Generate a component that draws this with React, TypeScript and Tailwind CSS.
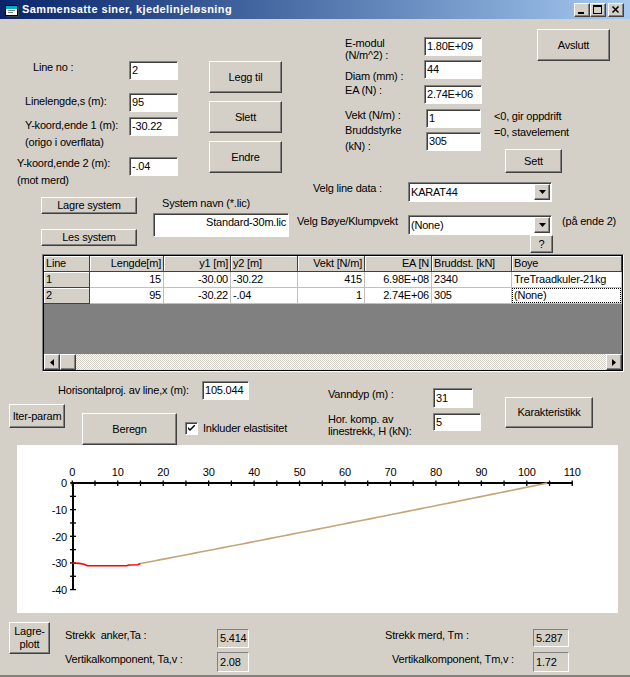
import React from "react";

const raised =
  "bg-[#d4d0c8] border border-t-white border-l-white border-r-[#404040] border-b-[#404040] shadow-[inset_-1px_-1px_#808080]";
const sunken =
  "bg-white border border-t-[#808080] border-l-[#808080] border-b-white border-r-white shadow-[inset_1px_1px_#404040]";

function Btn({ className = "", children }: { className?: string; children?: React.ReactNode }) {
  return (
    <div className={`${raised} flex items-center justify-center text-center shrink-0 whitespace-nowrap ${className}`}>
      {children}
    </div>
  );
}

function Field({
  className = "",
  children,
  right = false,
  top = false,
}: {
  className?: string;
  children?: React.ReactNode;
  right?: boolean;
  top?: boolean;
}) {
  return (
    <div
      className={`${sunken} flex shrink-0 px-[2px] whitespace-nowrap overflow-hidden ${right ? "justify-end" : ""} ${
        top ? "items-start pt-[2px]" : "items-center"
      } ${className}`}
    >
      {children}
    </div>
  );
}

function Out({ className = "", children }: { className?: string; children?: React.ReactNode }) {
  return (
    <div
      className={`bg-[#d4d0c8] border border-t-[#808080] border-l-[#808080] border-b-white border-r-white flex items-center pl-[2px] shrink-0 ${className}`}
    >
      {children}
    </div>
  );
}

function Combo({ value }: { value: string }) {
  return (
    <div className={`${sunken} flex items-center shrink-0 w-[144px] h-[20px] pl-[2px]`}>
      <span className="flex-1 whitespace-nowrap">{value}</span>
      <div className={`${raised} w-[16px] h-[16px] flex items-center justify-center mr-[1px]`}>
        <svg width="7" height="4" viewBox="0 0 7 4">
          <polygon points="0,0 7,0 3.5,4" fill="black" />
        </svg>
      </div>
    </div>
  );
}

function Chart() {
  const X0 = 55.3,
    SX = 4.545,
    Y0 = 38,
    SY = 2.665;
  const px = (x: number) => X0 + x * SX;
  const py = (y: number) => Y0 - y * SY;
  const xt = Array.from({ length: 23 }, (_, i) => i * 5);
  const yt = Array.from({ length: 9 }, (_, i) => -i * 5);
  const red: [number, number][] = [
    [0, -30],
    [1.5, -30.15],
    [2.6, -30.5],
    [3.3, -31.05],
    [12, -31.05],
    [12.4, -30.75],
    [14.4, -30.7],
    [15, -30.22],
  ];
  const tan: [number, number][] = [];
  for (let i = 0; i <= 60; i++) {
    const t = i / 60;
    const x = 15 + t * 89.5;
    const y = -30.22 + t * 30.18 - 2 * t * (1 - t) * 0.5;
    tan.push([x, y]);
  }
  const pts = (a: [number, number][]) => a.map(([x, y]) => `${px(x).toFixed(2)},${py(y).toFixed(2)}`).join(" ");
  return (
    <svg width="601" height="168" viewBox="0 0 601 168" fontFamily="'Liberation Sans', Arial, sans-serif" fontSize="11">
      <line x1={px(0) - 1} y1={Y0} x2={px(110) + 0.5} y2={Y0} stroke="black" strokeWidth="2" />
      <line x1={56} y1={Y0} x2={56} y2={py(-40)} stroke="black" strokeWidth="2" />
      {xt.map((v) => (
        <line key={"xt" + v} x1={px(v)} y1={35.5} x2={px(v)} y2={41} stroke="black" strokeWidth="1.3" />
      ))}
      {yt.map((v) => (
        <line key={"yt" + v} x1={53} y1={py(v)} x2={59} y2={py(v)} stroke="black" strokeWidth="1.3" />
      ))}
      {xt
        .filter((v) => v % 10 === 0)
        .map((v) => (
          <text key={"xl" + v} x={px(v)} y={31} textAnchor="middle" fill="black">
            {v}
          </text>
        ))}
      {yt
        .filter((v) => v % 10 === 0)
        .map((v) => (
          <text key={"yl" + v} x={50} y={py(v) + 4.2} textAnchor="end" fill="black">
            {v === 0 ? "0" : `-${-v}`}
          </text>
        ))}
      <polyline points={pts(tan)} fill="none" stroke="#c4a478" strokeWidth="1.6" />
      <polyline points={pts(red)} fill="none" stroke="#ff0000" strokeWidth="1.6" />
    </svg>
  );
}

function WinBtn({ children, className = "" }: { children: React.ReactNode; className?: string }) {
  return (
    <div
      className={`w-[16px] h-[14px] bg-[#d4d0c8] border border-t-white border-l-white border-r-[#404040] border-b-[#404040] shadow-[inset_-1px_-1px_#808080] flex items-start justify-start ${className}`}
    >
      {children}
    </div>
  );
}

const cols = [46, 74, 67, 67, 67, 67, 80, 110];
const headers: [string, boolean][] = [
  ["Line", false],
  ["Lengde[m]", true],
  ["y1 [m]", true],
  ["y2 [m]", false],
  ["Vekt [N/m]", true],
  ["EA [N", true],
  ["Bruddst. [kN]", false],
  ["Boye", false],
];
const rows: string[][] = [
  ["1", "15", "-30.00", "-30.22", "415", "6.98E+08", "2340", "TreTraadkuler-21kg"],
  ["2", "95", "-30.22", "-.04", "1", "2.74E+06", "305", "(None)"],
];

function Grid() {
  return (
    <div className="ml-[42px] w-[582px] h-[118px] shrink-0 border border-t-[#808080] border-l-[#808080] border-b-white border-r-white">
      <div className="w-full h-full border border-black flex flex-col bg-[#808080] overflow-hidden">
        <div className="flex h-[16px] shrink-0">
          {headers.map(([h, r], i) => (
            <div
              key={h}
              style={{ width: cols[i] }}
              className={`shrink-0 h-full bg-[#d4d0c8] border-r border-b border-r-[#404040] border-b-[#404040] shadow-[inset_1px_1px_white] flex items-center px-[2px] whitespace-nowrap overflow-hidden ${
                r ? "justify-end" : ""
              }`}
            >
              {h}
            </div>
          ))}
        </div>
        {rows.map((row, ri) => (
          <div key={ri} className="flex h-[16px] shrink-0">
            {row.map((c, i) => {
              const r = headers[i][1];
              if (i === 0)
                return (
                  <div
                    key={i}
                    style={{ width: cols[i] }}
                    className="shrink-0 h-full bg-[#d4d0c8] border-r border-b border-r-[#404040] border-b-[#404040] shadow-[inset_1px_1px_white] flex items-center px-[2px]"
                  >
                    {c}
                  </div>
                );
              const focus = ri === 1 && i === 7;
              return (
                <div
                  key={i}
                  style={{ width: cols[i] }}
                  className={`shrink-0 h-full bg-white border-r border-b border-[#c0c0c0] flex items-center whitespace-nowrap overflow-hidden ${
                    r ? "justify-end" : ""
                  } ${focus ? "p-0" : "px-[2px]"}`}
                >
                  {focus ? (
                    <div className="w-full h-full border border-dotted border-black flex items-center px-[1px]">{c}</div>
                  ) : (
                    c
                  )}
                </div>
              );
            })}
          </div>
        ))}
        <div className="flex-1" />
        <div className="flex h-[16px] shrink-0">
          <div className={`${raised} w-[16px] h-[16px] flex items-center justify-center`}>
            <svg width="4" height="7" viewBox="0 0 4 7">
              <polygon points="4,0 4,7 0,3.5" fill="black" />
            </svg>
          </div>
          <div className={`${raised} w-[16px] h-[16px]`} />
          <div className="flex-1 h-full bg-[image:repeating-conic-gradient(#ffffff_0%_25%,#d4d0c8_0%_50%)] bg-[length:2px_2px]" />
          <div className={`${raised} w-[16px] h-[16px] flex items-center justify-center`}>
            <svg width="4" height="7" viewBox="0 0 4 7">
              <polygon points="0,0 0,7 4,3.5" fill="black" />
            </svg>
          </div>
        </div>
      </div>
    </div>
  );
}

export default function App() {
  return (
    <div className="w-[630px] h-[677px] bg-[#d4d0c8] overflow-hidden text-[11px] leading-[13px] tracking-[-0.2px] text-black [font-family:'Liberation_Sans',Arial,sans-serif] flex flex-col border-b-2 border-b-[#808080]">
      {/* Title bar */}
      <div className="h-[19px] shrink-0 flex items-center bg-linear-to-r from-[#0a246a] to-[#a6caf0] pl-[5px] pr-[6px]">
        <svg width="14" height="12" viewBox="0 0 14 12" className="mt-[3px]">
          <rect x="0.5" y="0.5" width="12" height="10" fill="#ffffff" stroke="#000000" />
          <rect x="1" y="1" width="11" height="3" fill="#00b0c0" />
          <rect x="3" y="5" width="7" height="1" fill="#808080" />
          <rect x="3" y="7" width="5" height="1" fill="#808080" />
          <rect x="13" y="2" width="1" height="10" fill="#404040" />
          <rect x="2" y="11" width="12" height="1" fill="#404040" />
        </svg>
        <span className="ml-[3px] text-white font-bold tracking-[0.4px]">Sammensatte siner, kjedelinjeløsning</span>
        <div className="ml-auto flex">
          <WinBtn>
            <div className="ml-[3px] mt-[8px] w-[6px] h-[2px] bg-black" />
          </WinBtn>
          <WinBtn>
            <div className="ml-[2px] mt-[1px] w-[9px] h-[9px] border border-black border-t-2" />
          </WinBtn>
          <WinBtn className="ml-[2px]">
            <svg width="14" height="12" viewBox="0 0 14 12">
              <path d="M3.5 2.5 L9.5 8.5 M9.5 2.5 L3.5 8.5" stroke="black" strokeWidth="1.6" />
            </svg>
          </WinBtn>
        </div>
      </div>

      {/* Top section */}
      <div className="h-[235px] shrink-0 flex">
        {/* Left */}
        <div className="w-[297px] shrink-0 flex flex-col">
          <div className="h-[178px] shrink-0 flex">
            <div className="w-[178px] shrink-0 flex flex-col pt-[42px]">
              <div className="flex h-[19px]">
                <div className="w-[129px] shrink-0 pl-[33px] whitespace-nowrap">Line no :</div>
                <Field className="w-[49px] h-[19px]">2</Field>
              </div>
              <div className="flex h-[19px] mt-[13px]">
                <div className="w-[129px] shrink-0 pl-[25px] pt-[2px] whitespace-nowrap">Linelengde,s (m):</div>
                <Field className="w-[49px] h-[19px]">95</Field>
              </div>
              <div className="flex h-[19px] mt-[5px]">
                <div className="w-[129px] shrink-0 pl-[25px] leading-[17px] whitespace-nowrap">
                  Y-koord,ende 1 (m):
                  <br />
                  (origo i overflata)
                </div>
                <Field className="w-[49px] h-[19px]">-30.22</Field>
              </div>
              <div className="flex h-[19px] mt-[21px]">
                <div className="w-[129px] shrink-0 pl-[17px] leading-[17px] -mt-[2px] whitespace-nowrap">
                  Y-koord,ende 2 (m):
                  <br />
                  (mot merd)
                </div>
                <Field className="w-[49px] h-[19px]">-.04</Field>
              </div>
            </div>
            <div className="ml-[31px] pt-[42px] flex flex-col gap-[8px]">
              <Btn className="w-[73px] h-[32px]">Legg til</Btn>
              <Btn className="w-[73px] h-[32px]">Slett</Btn>
              <Btn className="w-[73px] h-[32px]">Endre</Btn>
            </div>
          </div>
          <div className="flex">
            <div className="ml-[41px] w-[96px] shrink-0 flex flex-col">
              <Btn className="w-[96px] h-[17px]">Lagre system</Btn>
              <Btn className="w-[96px] h-[17px] mt-[15px]">Les system</Btn>
            </div>
            <div className="ml-[16px] flex flex-col">
              <div className="h-[16px] pl-[9px] whitespace-nowrap">System navn (*.lic)</div>
              <Field className="w-[136px] h-[24px]" right top>
                Standard-30m.lic
              </Field>
            </div>
          </div>
        </div>

        {/* Right */}
        <div className="flex-1 flex flex-col">
          <div className="h-[154px] shrink-0 flex">
            <div className="w-[185px] shrink-0 flex flex-col pt-[18px]">
              <div className="flex h-[19px]">
                <div className="w-[127px] shrink-0 pl-[48px] leading-[12px] whitespace-nowrap">
                  E-modul
                  <br />
                  (N/m^2) :
                </div>
                <Field className="w-[58px] h-[19px]">1.80E+09</Field>
              </div>
              <div className="flex h-[19px] mt-[4px]">
                <div className="w-[127px] shrink-0 pl-[48px] pt-[10px] whitespace-nowrap">Diam (mm) :</div>
                <Field className="w-[58px] h-[19px]">44</Field>
              </div>
              <div className="flex h-[19px] mt-[6px]">
                <div className="w-[127px] shrink-0 pl-[48px] -mt-[1px] whitespace-nowrap">EA (N) :</div>
                <Field className="w-[58px] h-[19px]">2.74E+06</Field>
              </div>
              <div className="flex h-[19px] mt-[5px]">
                <div className="w-[129px] shrink-0 pl-[48px] whitespace-nowrap">Vekt (N/m) :</div>
                <Field className="w-[55px] h-[19px]">1</Field>
              </div>
              <div className="flex h-[19px] mt-[4px]">
                <div className="w-[129px] shrink-0 pl-[48px] leading-[16px] -mt-[10px] whitespace-nowrap">
                  Bruddstyrke
                  <br />
                  (kN) :
                </div>
                <Field className="w-[55px] h-[19px]">305</Field>
              </div>
            </div>
            <div className="ml-[12px] flex flex-col">
              <Btn className="ml-[43px] mt-[10px] w-[73px] h-[32px]">Avslutt</Btn>
              <div className="mt-[47px] leading-[16px] whitespace-nowrap">
                &lt;0, gir oppdrift
                <br />
                =0, stavelement
              </div>
              <Btn className="ml-[11px] mt-[9px] w-[57px] h-[24px]">Sett</Btn>
            </div>
          </div>
          <div className="flex mt-[9px] h-[20px] shrink-0">
            <div className="w-[111px] shrink-0 pl-[16px] whitespace-nowrap">Velg line data :</div>
            <Combo value="KARAT44" />
          </div>
          <div className="flex mt-[13px] h-[20px] shrink-0">
            <div className="w-[111px] shrink-0 whitespace-nowrap">Velg Bøye/Klumpvekt</div>
            <Combo value="(None)" />
            <div className="ml-[10px] whitespace-nowrap">(på ende 2)</div>
          </div>
          <Btn className="ml-[233px] w-[23px] h-[18px]">?</Btn>
        </div>
      </div>

      {/* Grid */}
      <Grid />

      {/* Middle controls */}
      <div className="h-[73px] shrink-0 flex">
        <div className="w-[320px] shrink-0 flex flex-col">
          <div className="flex mt-[9px]">
            <div className="w-[202px] shrink-0 pl-[58px] pt-[3px] whitespace-nowrap">Horisontalproj. av line,x (m):</div>
            <Field className="w-[47px] h-[19px]">105.044</Field>
          </div>
          <div className="flex mt-[4px]">
            <Btn className="ml-[9px] w-[56px] h-[24px]">Iter-param</Btn>
            <Btn className="ml-[17px] mt-[9px] w-[95px] h-[32px]">Beregn</Btn>
            <div className={`${sunken} ml-[8px] mt-[18px] w-[13px] h-[13px] flex items-center justify-center`}>
              <svg width="7" height="7" viewBox="0 0 7 7">
                <path d="M0 2 L0 4 L2 6 L7 1 L7 -1 L2 4 Z" fill="black" />
              </svg>
            </div>
            <div className="ml-[5px] mt-[18px] whitespace-nowrap">Inkluder elastisitet</div>
          </div>
        </div>
        <div className="flex ml-[8px]">
          <div className="flex flex-col">
            <div className="flex mt-[16px]">
              <div className="w-[105px] shrink-0 whitespace-nowrap">Vanndyp (m) :</div>
              <Field className="w-[40px] h-[20px]">31</Field>
            </div>
            <div className="flex mt-[5px]">
              <div className="w-[105px] shrink-0 leading-[12px] whitespace-nowrap">
                Hor. komp. av
                <br />
                linestrekk, H (kN):
              </div>
              <Field className="w-[48px] h-[18px]">5</Field>
            </div>
          </div>
          <Btn className="ml-[24px] mt-[25px] w-[88px] h-[31px]">Karakteristikk</Btn>
        </div>
      </div>

      {/* Chart */}
      <div className="ml-[17px] w-[601px] h-[168px] bg-white shrink-0">
        <Chart />
      </div>

      {/* Bottom */}
      <div className="flex flex-1">
        <Btn className="ml-[9px] mt-[9px] w-[41px] h-[32px] leading-[13px]">
          Lagre-
          <br />
          plott
        </Btn>
        <div className="ml-[15px] flex flex-col">
          <div className="flex mt-[16px]">
            <div className="w-[152px] shrink-0 whitespace-pre">Strekk  anker,Ta :</div>
            <Out className="w-[32px] h-[19px]">5.414</Out>
          </div>
          <div className="flex mt-[4px]">
            <div className="w-[152px] shrink-0 pt-[1px] whitespace-nowrap">Vertikalkomponent, Ta,v :</div>
            <Out className="w-[32px] h-[20px]">2.08</Out>
          </div>
        </div>
        <div className="ml-[136px] flex flex-col">
          <div className="flex mt-[16px]">
            <div className="w-[148px] shrink-0 whitespace-nowrap">Strekk merd, Tm :</div>
            <Out className="w-[36px] h-[18px]">5.287</Out>
          </div>
          <div className="flex mt-[5px]">
            <div className="w-[148px] shrink-0 pl-[7px] pt-[1px] whitespace-nowrap">Vertikalkomponent, Tm,v :</div>
            <Out className="w-[36px] h-[20px]">1.72</Out>
          </div>
        </div>
      </div>
    </div>
  );
}
